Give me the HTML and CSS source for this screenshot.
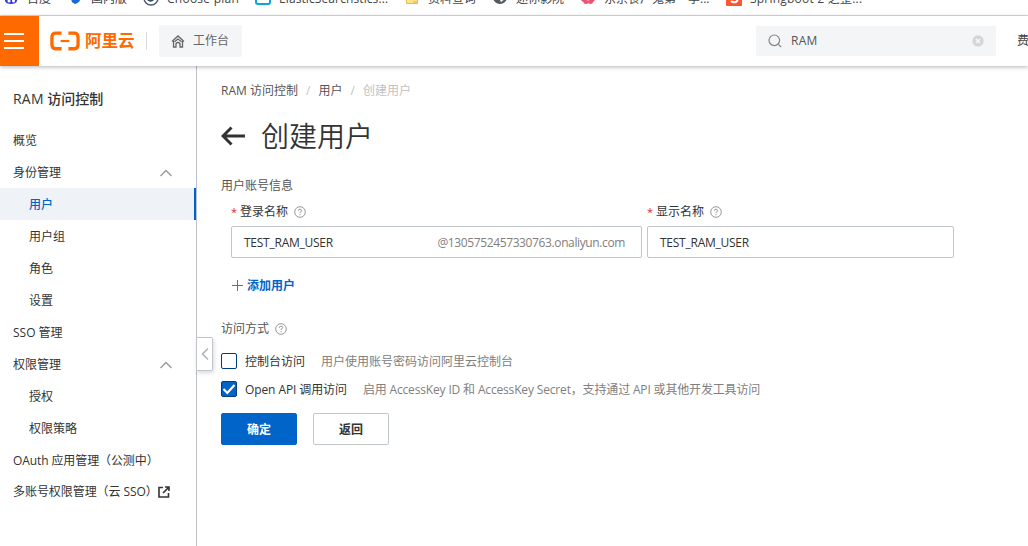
FILE: index.html
```html
<!DOCTYPE html>
<html lang="zh-CN">
<head>
<meta charset="utf-8">
<title>创建用户</title>
<link rel="stylesheet" href="styles.css">
</head>
<body>
<div class="bookmarks">
  <div class="bm bm-baidu"><svg width="12" height="14" viewBox="0 0 12 14"><path d="M0 8Q6-3 12 8V11Q11 14 6 14Q1 14 0 11Z" fill="#3039de"/><circle cx="4" cy="11" r="1.5" fill="#fff"/><circle cx="8.5" cy="11" r="1.5" fill="#fff"/></svg><span>百度</span></div>
  <div class="bm bm-cn"><svg width="12" height="14" viewBox="0 0 12 14"><path d="M0 4L4 1V11L7 14L3 12Z" fill="#1683ea"/><path d="M4 7L11 8Q12 12 6 14L3 12Z" fill="#1769df"/></svg><span>国内版</span></div>
  <div class="bm bm-plan"><svg width="16" height="16" viewBox="0 0 16 16"><circle cx="8" cy="8" r="7" fill="none" stroke="#46566a" stroke-width="1.4"/><path d="M4 10Q8 14 12 9V7H5Z" fill="#354c64"/></svg><span>Choose plan</span></div>
  <div class="bm bm-elastic"><svg width="16" height="16" viewBox="0 0 16 16"><rect x="1" y="1" width="14" height="13" rx="2" fill="none" stroke="#0ba5d9" stroke-width="2"/></svg><span>ElasticSearchstics...</span></div>
  <div class="bm bm-folder"><svg width="12" height="14" viewBox="0 0 12 14"><path d="M.5 2.500H11.500V13.500H.500Z" fill="#ffe28a" stroke="#e6bd4d"/><path d="M7 12h4" stroke="#dfb34b"/></svg><span>资料查询</span></div>
  <div class="bm bm-film"><svg width="14" height="14" viewBox="0 0 14 14"><circle cx="7" cy="7" r="7" fill="#555960"/><path d="M6 8L10 6L12 9L8 12Z" fill="#fff"/></svg><span>迷你影院</span></div>
  <div class="bm bm-anime"><svg width="14" height="14" viewBox="0 0 14 14"><g fill="#f05275"><circle cx="3" cy="9" r="3"/><circle cx="11" cy="9" r="3"/><circle cx="5" cy="11.500" r="2.500"/><circle cx="9.500" cy="11.500" r="2.500"/></g><circle cx="7" cy="9" r="1.500" fill="#ffd0d9"/></svg><span>东京食尸鬼第一季...</span></div>
  <div class="bm bm-spring"><svg width="16" height="16" viewBox="0 0 16 16"><rect width="16" height="16" rx="1" fill="#fc5531"/><path d="M5 11Q7 13 10 12Q13 10 10 8" fill="none" stroke="#fff" stroke-width="2"/></svg><span>Springboot 2 之整...</span></div>
</div>
<header class="topbar">
  <div class="menu"><i></i><i></i><i></i></div>
  <div class="logo">
    <svg width="31" height="20" viewBox="0 0 31 20" fill="none" stroke="#ff6a00"><path d="M12 1.800H6Q2 1.800 2 6V14Q2 18 6 18H12M19 1.800H25Q29 1.800 29 6V14Q29 18 25 18H19" stroke-width="3.400"/><path d="M11 10H20" stroke-width="2.200"/></svg>
    <span>阿里云</span>
  </div>
  <div class="divider"></div>
  <div class="workbench"><svg width="14" height="13" viewBox="0 0 14 13" fill="none" stroke="#666" stroke-width="1.300"><path d="M1 6.500L7 1L13 6.500M2.500 6V12H5V8.500Q7 6.500 9 8.500V12H11.500V6M3.500 6.800L7 4L10.500 6.800"/></svg><span>工作台</span></div>
  <div class="search"><svg width="14" height="14" viewBox="0 0 14 14" fill="none" stroke="#858585" stroke-width="1.200"><circle cx="6.300" cy="6.300" r="5.300"/><path d="M10.300 10.300L13 13"/></svg><span>RAM</span><svg class="clear" width="12" height="12" viewBox="0 0 12 12"><circle cx="6" cy="6" r="5.700" fill="#d5d6d8"/><path d="M4 4L8 8M8 4L4 8" stroke="#f7f7f7" stroke-width="1.500"/></svg></div>
  <div class="fee">费用</div>
</header>
<div class="body">
  <aside class="sidebar">
    <div class="product"><span class="product-en">RAM</span> 访问控制</div>
    <nav>
      <div class="item">概览</div>
      <div class="item">身份管理<svg class="caret" width="14" height="8" viewBox="0 0 14 8"><path d="M1.500 7L7 1.500L12.500 7"/></svg></div>
      <div class="item sub active">用户</div>
      <div class="item sub">用户组</div>
      <div class="item sub">角色</div>
      <div class="item sub">设置</div>
      <div class="item">SSO 管理</div>
      <div class="item">权限管理<svg class="caret" width="14" height="8" viewBox="0 0 14 8"><path d="M1.500 7L7 1.500L12.500 7"/></svg></div>
      <div class="item sub">授权</div>
      <div class="item sub">权限策略</div>
      <div class="item oauth">OAuth 应用管理（公测中）</div>
      <div class="item multi"><span>多账号权限管理（云 SSO）</span><svg width="12" height="12" viewBox="0 0 12 12" fill="none" stroke="#333" stroke-width="1.600"><path d="M5 1.500H1V11H10.500V7M7 1H11V5M11 1L5 7"/></svg></div>
    </nav>
    <div class="collapse"><svg width="8" height="14" viewBox="0 0 8 14"><path d="M7 1.500L1.500 7L7 12.500" fill="none" stroke="#b4b4b4" stroke-width="1.600"/></svg></div>
  </aside>
  <main class="main">
    <div class="crumbs"><span class="crumb-product">RAM 访问控制</span><b>/</b><span>用户</span><b>/</b><span class="current">创建用户</span></div>
    <div class="title"><svg width="24" height="20" viewBox="0 0 24 20" fill="none" stroke="#333" stroke-width="3"><path d="M10.500 1.500L2 10L10.500 18.500M2 10H24"/></svg><h1>创建用户</h1></div>
    <div class="section">用户账号信息</div>
    <div class="fields">
      <div class="field login">
        <div class="label"><em>*</em><span>登录名称</span><svg class="help" viewBox="0 0 12 12"><circle cx="6" cy="6" r="5.300"/><path d="M4.300 4.800Q4.300 3.200 6 3.200Q7.700 3.200 7.700 4.700Q7.700 5.500 6 6.300V7.200M6 8.100V9.200"/></svg></div>
        <div class="input"><span class="value">TEST_RAM_USER</span><span class="suffix">@1305752457330763.onaliyun.com</span></div>
      </div>
      <div class="field display">
        <div class="label"><em>*</em><span>显示名称</span><svg class="help" viewBox="0 0 12 12"><circle cx="6" cy="6" r="5.300"/><path d="M4.300 4.800Q4.300 3.200 6 3.200Q7.700 3.200 7.700 4.700Q7.700 5.500 6 6.300V7.200M6 8.100V9.200"/></svg></div>
        <div class="input"><span class="value">TEST_RAM_USER</span></div>
      </div>
    </div>
    <div class="add"><svg width="11" height="11" viewBox="0 0 11 11"><path d="M5.500 0V11M0 5.500H11" stroke="#3a78ca"/></svg><span>添加用户</span></div>
    <div class="section access">访问方式<svg class="help" viewBox="0 0 12 12"><circle cx="6" cy="6" r="5.300"/><path d="M4.300 4.800Q4.300 3.200 6 3.200Q7.700 3.200 7.700 4.700Q7.700 5.500 6 6.300V7.200M6 8.100V9.200"/></svg></div>
    <div class="option"><div class="check"></div><span>控制台访问</span><small>用户使用账号密码访问阿里云控制台</small></div>
    <div class="option api"><div class="check on"><svg width="14" height="14" viewBox="0 0 14 14"><path d="M1.500 7L5.300 11L12.500 3" fill="none" stroke="#fff" stroke-width="2.200"/></svg></div><span class="api-name">Open API 调用访问</span><small class="api-note">启用 AccessKey ID 和 AccessKey Secret，支持通过 API 或其他开发工具访问</small></div>
    <div class="buttons"><div class="btn primary">确定</div><div class="btn">返回</div></div>
  </main>
</div>
</body>
</html>
```
FILE: styles.css
```css
* { box-sizing: border-box; }
body {
  margin: 0;
  width: 1028px;
  height: 546px;
  overflow: hidden;
  background: #fff;
  color: #333;
  font: 12px/20px "Open Sans", "Noto Sans CJK SC", sans-serif;
}
svg { display: block; flex: none; }
span { white-space: nowrap; }
.bookmarks {
  display: flex;
  height: 16px;
  border-bottom: 1px solid #d9dadc;
  overflow: hidden;
  padding-left: 5px;
}
.bm { display: flex; flex: none; height: 20px; margin-top: -11px; color: #444; }
.bm svg { margin: 1px 9px 0 0; }
.bm span { line-height: 20px; }
.bm-baidu { width: 64px; }
.bm-baidu svg { margin-right: 10px; }
.bm-cn { width: 74px; }
.bm-cn svg { margin-right: 10px; }
.bm-plan { width: 112px; }
.bm-plan span { letter-spacing: .25px; }
.bm-plan svg { margin-right: 8px; }
.bm-elastic { width: 151px; }
.bm-elastic span { letter-spacing: .1px; }
.bm-elastic svg { margin-right: 8px; }
.bm-folder { width: 87px; }
.bm-folder svg { margin-right: 10px; }
.bm-film { width: 88px; }
.bm-anime { width: 145px; }
.bm-spring span { letter-spacing: .22px; }
.bm-spring svg { margin-right: 8px; }
.topbar {
  display: flex;
  align-items: center;
  height: 50px;
  background: #fff;
  position: relative;
  box-shadow: 0 1px 4px rgba(0, 0, 0, .3);
  z-index: 2;
}
.menu {
  width: 39px;
  height: 50px;
  padding: 17px 15px 0 4px;
  background: #ff6a00;
}
.menu i { display: block; height: 2px; margin-bottom: 5px; background: #fff; }
.logo { display: flex; align-items: center; width: 107px; padding-left: 11px; }
.logo svg { width: 30px; }
.logo span {
  margin-left: 5px;
  color: #ff6a00;
  font-size: 16.500px;
  font-weight: 700;
}
.divider { width: 1px; height: 18px; background: #d9d9d9; }
.workbench {
  display: flex;
  align-items: center;
  width: 83px;
  height: 32px;
  margin-left: 12px;
  padding-left: 12px;
  background: #f4f5f7;
  border-radius: 2px;
  color: #666;
}
.workbench span { margin-left: 8px; }
.search {
  display: flex;
  align-items: center;
  width: 240px;
  height: 30px;
  margin-left: 514px;
  padding: 0 12px;
  background: #f4f5f7;
  color: #555;
}
.search span { margin-left: 9px; letter-spacing: .3px; }
.search .clear { margin-left: auto; }
.fee { width: 11px; margin-left: 21px; overflow: hidden; white-space: nowrap; color: #444; }
.body { display: flex; height: 480px; }
.sidebar { position: relative; width: 197px; border-right: 1px solid #bec1cb; }
.product { height: 58px; padding: 23px 0 0 13px; font-size: 14px; font-weight: 500; }
.product-en { letter-spacing: .2px; }
.item { display: flex; align-items: center; height: 32px; padding: 2px 24px 0 13px; }
.item.sub { padding-left: 29px; }
.active { background: #eff2f7; border-right: 2px solid #0064c8; color: #0064c8; font-weight: 500; }
.caret { margin-left: auto; margin-right: -1px; fill: none; stroke: #999; stroke-width: 1.400; }
.oauth { letter-spacing: -.1px; }
.multi { height: 32px; padding-top: 0; letter-spacing: -.06px; }
.collapse {
  position: absolute;
  left: 196px;
  top: 271px;
  display: flex;
  align-items: center;
  justify-content: center;
  width: 17px;
  height: 34px;
  border: 1px solid #c0c6cc;
  border-radius: 0 2px 2px 0;
  background: #fff;
  box-shadow: 1px 2px 4px rgba(0, 0, 0, .15);
}
.main { flex: 1; padding: 15px 0 0 24px; }
.crumbs { display: flex; height: 20px; color: #555; }
.crumbs b { width: 20.500px; text-align: center; color: #c1c1c1; font-weight: 400; }
.crumbs .current { color: #c1c1c1; }
.title { display: flex; align-items: center; height: 40px; margin-top: 15px; }
.title h1 { margin: 0 0 0 16px; font-size: 28px; line-height: 40px; font-weight: 350; }
.section { display: flex; align-items: center; height: 20px; margin-top: 20px; color: #555; }
.fields { display: flex; gap: 5px; margin: 6px 0 0 10px; }
.login { width: 411px; }
.display { width: 307px; }
.label { display: flex; align-items: center; height: 20px; margin-bottom: 4px; }
.label em { width: 9px; color: #d93026; font-size: 11px; font-style: normal; }
.help { width: 12px; height: 12px; margin-left: 6px; fill: none; stroke: #999; stroke-width: 1; }
.input {
  display: flex;
  align-items: center;
  justify-content: space-between;
  height: 32px;
  padding: 2px 16px 0 12px;
  border: 1px solid #c0c6cc;
  border-radius: 2px;
}
.value { letter-spacing: -.25px; }
.suffix { color: #808080; letter-spacing: -.38px; }
.add {
  display: flex;
  align-items: center;
  height: 20px;
  margin: 18px 0 0 11px;
  color: #0064c8;
  font-weight: 700;
}
.add svg { margin-top: -2px; }
.add span { margin-left: 4px; }
.access { margin-top: 23px; }
.option { display: flex; align-items: center; height: 20px; margin-top: 13px; }
.option span, .option small { line-height: 20px; }
.option small { margin-left: 16px; color: #808080; font-size: 12px; white-space: nowrap; }
.check { width: 16px; height: 16px; margin: -2px 8px 0 0; border: 1px solid #003b7d; border-radius: 2px; }
.on { background: #0064c8; }
.api { margin-top: 8px; }
.api-name { letter-spacing: -.1px; }
.api-note { letter-spacing: -.16px; }
.buttons { display: flex; gap: 16px; margin-top: 13px; }
.btn {
  width: 76px;
  height: 32px;
  padding-top: 1px;
  border: 1px solid #c0c6cc;
  border-radius: 2px;
  line-height: 30px;
  text-align: center;
  font-weight: 700;
}
.primary { border-color: #0064c8; background: #0064c8; color: #fff; }
```
